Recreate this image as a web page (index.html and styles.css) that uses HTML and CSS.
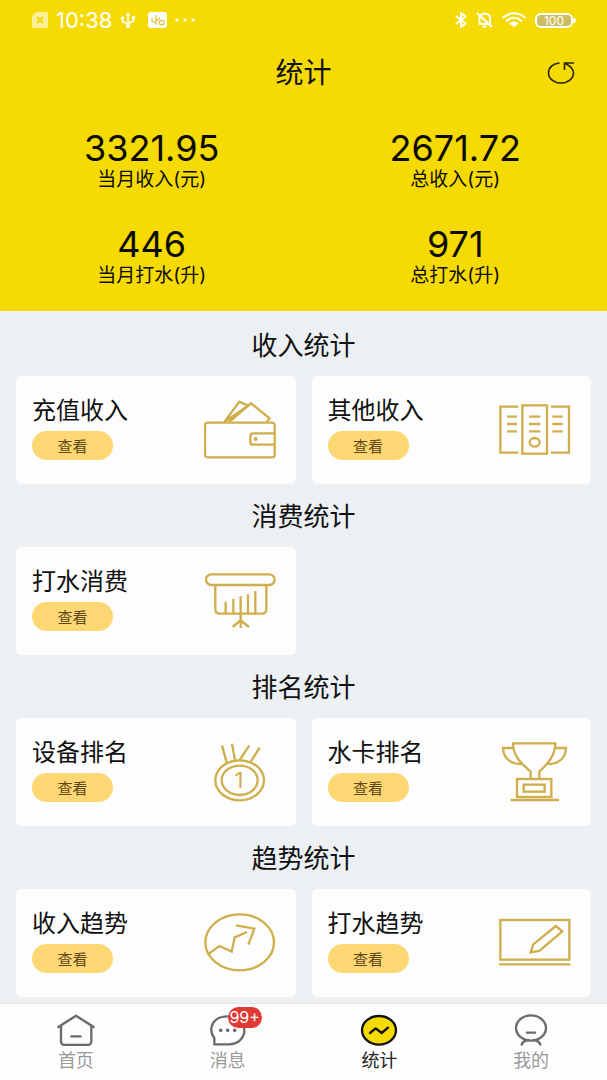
FILE: index.html
```html
<!DOCTYPE html>
<html lang="zh-CN">
<head>
  <meta charset="UTF-8" />
  <meta name="viewport" content="width=device-width, initial-scale=1" />
  <title>统计</title>
  <link rel="stylesheet" href="styles.css">
</head>
<body>

  <header class="header">
    <div class="status-bar">
      <div class="status-group">
        <svg class="dim" width="16" height="16" viewBox="0 0 16 16"><path d="M4 0H14a2 2 0 0 1 2 2V14a2 2 0 0 1-2 2H2a2 2 0 0 1-2-2V4Z" fill="#fff"/><path d="M5 5l6 6M11 5l-6 6" stroke="#f6da04" stroke-width="2"/></svg>
        <span class="time">10:38</span>
        <svg width="16" height="16" viewBox="0 0 16 16" fill="none" stroke="#fff" stroke-width="1.600"><path d="M8 2V14M8 12L2.500 9.500V6M8 11.500L13.500 9V5.500"/><path d="M8 0L10.500 3.500H5.500Z" fill="#fff" stroke="none"/><circle cx="2.500" cy="6" r="1.700" fill="#fff" stroke="none"/><path d="M12 4h3v3h-3z" fill="#fff" stroke="none"/><circle cx="8" cy="14" r="2" fill="#fff" stroke="none"/></svg>
        <svg class="usb-box" width="19" height="16" viewBox="0 0 19 16"><rect width="19" height="16" rx="3" fill="#fff"/><path d="M8 3V13M8 11L4 9V6M8 9l3-2V5" fill="none" stroke="#dfc640" stroke-width="1.300"/><rect x="11.500" y="8.500" width="4.500" height="4" rx="1" fill="none" stroke="#dfc640" stroke-width="1.300"/></svg>
        <svg width="20" height="16" viewBox="0 0 20 16" fill="#fff"><circle cx="2" cy="8" r="1.600"/><circle cx="10" cy="8" r="1.600"/><circle cx="18" cy="8" r="1.600"/></svg>
      </div>
      <div class="status-group">
        <svg width="14" height="16" viewBox="0 0 14 16" fill="none" stroke="#fff" stroke-width="2"><path d="M2 4L11.500 11.500L7 15V1L11.500 4.500L2 12"/></svg>
        <svg width="17" height="16" viewBox="0 0 17 16" fill="none" stroke="#fff" stroke-width="2"><path d="M3 12H14V6C14 0.500 5 0.500 3.500 5V12M1 1L16 15M6.500 14.500h4"/></svg>
        <svg width="26" height="16" viewBox="0 0 26 16" fill="none" stroke="#fff" stroke-width="2"><path d="M1.500 6Q13-3.500 24.500 6M5 9.500Q13 2 21 9.500"/><path d="M8 11.500Q13 7.500 18 11.500L13 15Z" fill="#fff" stroke="none"/></svg>
        <span class="battery">100</span>
      </div>
    </div>

    <div class="title-bar">
      <h1 class="title">统计</h1>
      <button class="refresh" aria-label="刷新">
        <svg width="28" height="24" viewBox="0 0 28 24" fill="none" stroke="#2b2408" stroke-width="1.600"><path d="M12.500 2C6 2.500 1.500 6.500 1.500 12S7 22 14 22S26.500 17.500 26.500 12C26.500 7.500 22.500 4.500 17.500 2M17.500 9V2H27"/></svg>
      </button>
    </div>

    <div class="stats">
      <div class="stat"><strong class="stat-value">3321.95</strong><span class="stat-label">当月收入(元)</span></div>
      <div class="stat"><strong class="stat-value">2671.72</strong><span class="stat-label">总收入(元)</span></div>
      <div class="stat"><strong class="stat-value">446</strong><span class="stat-label">当月打水(升)</span></div>
      <div class="stat"><strong class="stat-value">971</strong><span class="stat-label">总打水(升)</span></div>
    </div>
  </header>

  <main class="content">
    <h2 class="section-title">收入统计</h2>
    <div class="cards">
      <article class="card">
        <div class="card-text"><h3 class="card-title">充值收入</h3><button class="view-btn">查看</button></div>
        <svg class="card-icon" viewBox="0 0 216 180">
          <rect x="3" y="68" width="209" height="104" rx="8"/>
          <path d="M212 100H148q-9 0-9 9v16q0 9 9 9h64M61 66L106 5L131 16M75 66L141 10L197 55L188 66M61 66L131 18"/>
          <circle class="solid" cx="155" cy="117" r="6"/>
        </svg>
      </article>
      <article class="card">
        <div class="card-text"><h3 class="card-title">其他收入</h3><button class="view-btn">查看</button></div>
        <svg class="card-icon" viewBox="0 0 216 180">
          <path d="M58 20H4V158H58M156 20H210V158H156"/>
          <rect x="70" y="16" width="74" height="145"/>
          <path d="M24 50H54M24 72H54M24 94H54M90 50H124M90 72H124M90 94H124M160 50H191M160 72H191M160 94H191"/>
          <ellipse cx="107" cy="127" rx="15" ry="13"/>
        </svg>
      </article>
    </div>

    <h2 class="section-title">消费统计</h2>
    <div class="cards">
      <article class="card">
        <div class="card-text"><h3 class="card-title">打水消费</h3><button class="view-btn">查看</button></div>
        <svg class="card-icon" viewBox="0 0 216 180">
          <rect x="6" y="10" width="206" height="32" rx="16"/>
          <path d="M34 42V114q0 14 14 14H173q14 0 14-14V42M65 128V92M88 128V84M110 128V76M132 128V70M154 128V60M110 128V171M86 168L110 148L135 168"/>
        </svg>
      </article>
    </div>

    <h2 class="section-title">排名统计</h2>
    <div class="cards">
      <article class="card">
        <div class="card-text"><h3 class="card-title">设备排名</h3><button class="view-btn">查看</button></div>
        <svg class="card-icon" viewBox="0 0 216 180">
          <ellipse cx="107" cy="115" rx="73" ry="60"/>
          <ellipse cx="107" cy="115" rx="54" ry="44"/>
          <path d="M54 10L68 62M84 5L93 54M136 10L107 54M167 17L139 61"/>
          <text class="medal-num" x="105" y="139">1</text>
        </svg>
      </article>
      <article class="card">
        <div class="card-text"><h3 class="card-title">水卡排名</h3><button class="view-btn">查看</button></div>
        <svg class="card-icon" viewBox="0 0 216 180">
          <path d="M95 111V89C62 62 42 38 42 4H169C169 38 150 62 121 89V111"/>
          <path d="M42 18H12C13 46 32 66 67 66M169 18H201C200 46 182 66 147 66"/>
          <rect x="54" y="111" width="103" height="54"/>
          <rect x="74" y="128" width="63" height="21"/>
          <path d="M35 174H180"/>
        </svg>
      </article>
    </div>

    <h2 class="section-title">趋势统计</h2>
    <div class="cards">
      <article class="card">
        <div class="card-text"><h3 class="card-title">收入趋势</h3><button class="view-btn">查看</button></div>
        <svg class="card-icon" viewBox="0 0 216 180">
          <ellipse cx="107" cy="88" rx="103" ry="84"/>
          <path d="M15 122L46 99L83 116L92 73L129 57M96 37L151 47L133 95"/>
        </svg>
      </article>
      <article class="card">
        <div class="card-text"><h3 class="card-title">打水趋势</h3><button class="view-btn">查看</button></div>
        <svg class="card-icon" viewBox="0 0 216 180">
          <rect x="4" y="21" width="207" height="119"/>
          <path d="M0 154H214M95 118L103 94L170 39L190 55L121 114Z"/>
        </svg>
      </article>
    </div>
  </main>

  <nav class="tabbar">
    <a class="tab" href="#home">
      <svg class="tab-icon" viewBox="0 0 114 96"><path d="M4 39L57 5L110 39M12 36V80q0 13 13 13H90q13 0 13-13V36M43 67H71"/></svg>
      <span>首页</span>
    </a>
    <a class="tab" href="#message">
      <span class="icon-wrap">
        <svg class="tab-icon" viewBox="0 0 114 96"><path d="M16 91V72C8 62 5 50 8 38C13 18 32 7 56 7C84 7 106 24 106 49C106 72 88 91 60 91Z"/><path d="M35 49h.1M56 49h.1M77 49h.1" stroke-width="11"/></svg>
        <span class="badge">99+</span>
      </span>
      <span>消息</span>
    </a>
    <a class="tab active" href="#stats">
      <svg class="tab-icon" viewBox="0 0 114 96"><ellipse cx="57" cy="49" rx="51" ry="43"/><path d="M30 57L47 43L65 57L84 41"/></svg>
      <span>统计</span>
    </a>
    <a class="tab" href="#mine">
      <svg class="tab-icon" viewBox="0 0 114 96"><ellipse cx="57" cy="42" rx="45" ry="38"/><path d="M45 56H69M29 92Q33 80 49 78M85 92Q81 80 65 78"/></svg>
      <span>我的</span>
    </a>
  </nav>

</body>
</html>
```
FILE: styles.css
```css
* {
  box-sizing: border-box;
}

body {
  margin: 0;
  min-height: 100vh;
  display: flex;
  flex-direction: column;
  background: #ecf0f3;
  color: #111;
  font-family: Inter, "Noto Sans CJK SC", sans-serif;
}

h1, h2, h3 {
  margin: 0;
  font-weight: 400;
}

button {
  border: none;
  padding: 0;
  font-family: inherit;
  cursor: pointer;
}

svg {
  display: block;
  flex: none;
}

.header {
  background: #f6da04;
  padding-bottom: 22px;
}

/* Status bar */
.status-bar {
  display: flex;
  justify-content: space-between;
  align-items: center;
  height: 40px;
  padding: 0 32px;
  color: #fff;
}

.status-group {
  display: flex;
  align-items: center;
  gap: 8px;
}

.dim {
  opacity: 0.6;
}

.usb-box {
  margin-left: 4px;
}

.time {
  font-size: 22px;
  line-height: 24px;
}

.battery {
  position: relative;
  width: 38px;
  height: 15px;
  margin-right: 2px;
  border: 2px solid #fff;
  border-radius: 6px;
  background: #cdbd62;
  font-size: 12px;
  line-height: 11px;
  text-align: center;
}

.battery::after {
  content: "";
  position: absolute;
  top: 3px;
  right: -5px;
  width: 3px;
  height: 5px;
  border-radius: 0 3px 3px 0;
  background: #fff;
}

/* Title */
.title-bar {
  display: grid;
  grid-template-columns: 1fr auto 1fr;
  align-items: center;
  height: 66px;
  padding: 0 32px;
}

.title {
  grid-column: 2;
  font-size: 28px;
  line-height: 40px;
}

.refresh {
  justify-self: end;
  background: none;
}

/* Totals */
.stats {
  display: grid;
  grid-template-columns: 1fr 1fr;
  row-gap: 32px;
  padding-top: 23px;
}

.stat {
  display: flex;
  flex-direction: column;
  align-items: center;
  color: #0d0c02;
}

.stat-value {
  font-size: 36px;
  line-height: 38px;
  font-weight: 400;
}

.stat-label {
  font-size: 19px;
  line-height: 26px;
}

/* Sections */
.content {
  flex: 1;
  padding: 2px 16px 6px;
}

.section-title {
  padding-top: 2px;
  font-size: 26px;
  line-height: 61px;
  text-align: center;
}

.cards {
  display: grid;
  grid-template-columns: 1fr 1fr;
  gap: 16px;
}

.card {
  display: flex;
  justify-content: space-between;
  align-items: center;
  height: 108px;
  padding: 0 20px 0 16px;
  border-radius: 6px;
  background: #fdfdfd;
}

.card-text {
  display: flex;
  flex-direction: column;
  align-items: flex-start;
  gap: 6px;
  padding-bottom: 4px;
}

.card-title {
  font-size: 24px;
  line-height: 28px;
}

.view-btn {
  width: 81px;
  height: 29px;
  border-radius: 15px;
  background: #fdd773;
  color: #5f481a;
  font-size: 15px;
}

.card-icon {
  width: 72px;
  height: 60px;
  fill: none;
  stroke: #cfae4c;
  stroke-width: 7;
}

.card-icon .solid {
  fill: #cfae4c;
  stroke: none;
}

.medal-num {
  fill: #cfae4c;
  stroke: none;
  font-size: 66px;
  text-anchor: middle;
}

/* Bottom tabs */
.tabbar {
  position: sticky;
  bottom: 0;
  display: grid;
  grid-template-columns: repeat(4, 1fr);
  height: 77px;
  padding-top: 10px;
  border-top: 1px solid #e6e8ea;
  background: #fdfdfd;
}

.tab {
  display: flex;
  flex-direction: column;
  align-items: center;
  gap: 3px;
  color: #999;
  font-size: 18px;
  line-height: 24px;
  text-decoration: none;
}

.tab-icon {
  width: 38px;
  height: 32px;
  fill: none;
  stroke: #6b6b6b;
  stroke-width: 7;
  stroke-linecap: round;
  stroke-linejoin: round;
}

.tab.active {
  color: #222;
}

.tab.active .tab-icon {
  stroke: #111;
}

.tab.active ellipse {
  fill: #f6da04;
}

.icon-wrap {
  position: relative;
}

.badge {
  position: absolute;
  top: -7px;
  left: 19px;
  width: 34px;
  height: 21px;
  border-radius: 11px;
  background: #e03a35;
  color: #fff;
  font-size: 16px;
  line-height: 21px;
  text-align: center;
}
```
